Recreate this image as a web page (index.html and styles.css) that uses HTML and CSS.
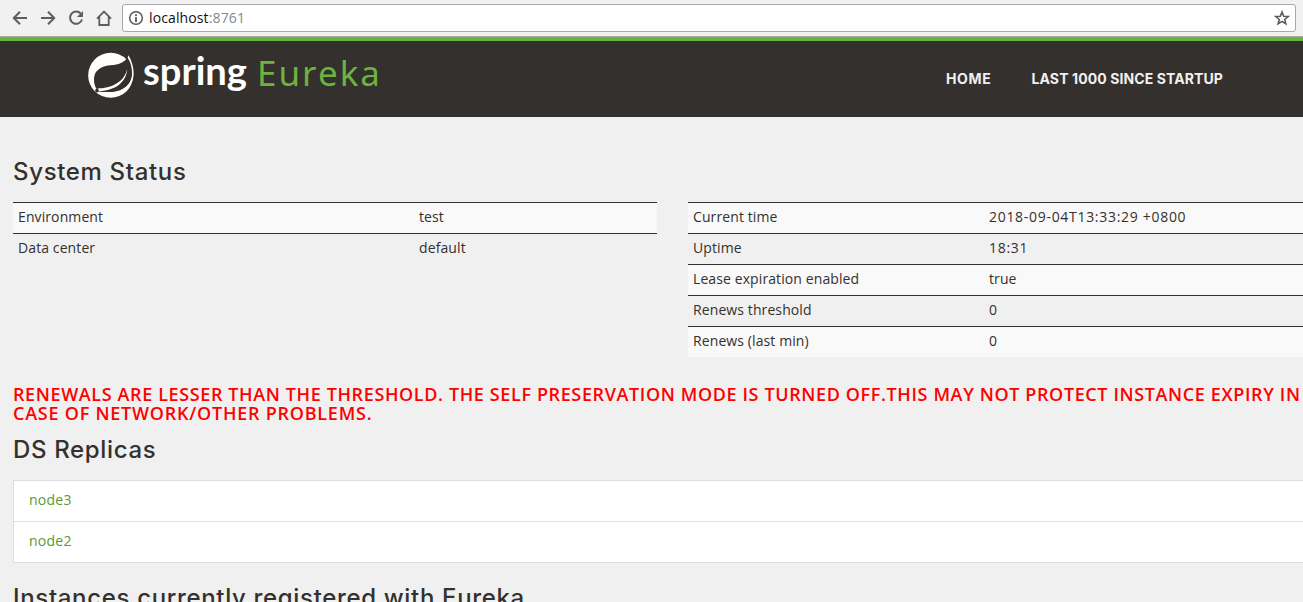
FILE: index.html
```
<!DOCTYPE html>
<html lang="en">
<head>
<meta charset="utf-8">
<title>Eureka</title>
<link rel="stylesheet" href="styles.css">
</head>
<body>
<div class="browser-bar">
  <svg class="nav-icons" width="122" height="36" viewBox="0 0 122 36" fill="none" stroke="#5a5d61" stroke-width="2">
    <path d="M27 18H14.5M20 11.8L13.8 18L20 24.2"/>
    <path d="M41 18H53.5M48 11.8L54.2 18L48 24.2"/>
    <path d="M80.7 13.6A6.1 6.1 0 1 0 82 19.5"/>
    <path d="M83 11V17H77Z" fill="#5a5d61" stroke="none"/>
    <path d="M97 18.6L104 11.6L111 18.6M99.3 17V25H108.7V17" stroke-width="1.8"/>
  </svg>
  <div class="address">
    <svg class="info" width="16" height="16" viewBox="0 0 16 16"><circle cx="8" cy="8" r="6.3" fill="none" stroke="#55585c" stroke-width="1.5"/><path d="M7.1 4.2h1.8v1.8H7.1zM7.1 7h1.8v5H7.1z" fill="#55585c"/></svg>
    <span class="url">localhost<span class="port">:8761</span></span>
    <svg class="star" width="16" height="16" viewBox="0 0 16 16"><path d="M8 1.9L9.7 6.2L14.2 6.5L10.7 9.4L11.9 13.9L8 11.4L4.1 13.9L5.3 9.4L1.8 6.5L6.3 6.2Z" fill="none" stroke="#55585c" stroke-width="1.5"/></svg>
  </div>
</div>
<header class="navbar">
  <svg class="logo" width="300" height="60" viewBox="0 0 300 60">
    <g transform="scale(.33333)">
      <circle cx="68" cy="82" r="67.5" fill="#fff"/>
      <path d="M121 22C136 48 142 70 140 92L150 82V20Z" fill="#34302d"/>
      <path d="M121 24C110 44 96 49 66 52C36 55 18 70 18 94C18 105 20 114 25 122L34 131C66 134 92 131 105 122C122 112 132 96 133 80C134 62 130 42 121 24Z" fill="#34302d"/>
      <path d="M118 63C110 94 88 110 58 118C48 121 38 121 28 122L32 130C60 128 84 121 98 106C110 94 117 80 118 63Z" fill="#fff"/>
      <path d="M121 22C134 42 139 68 136 88C132 108 118 124 100 129L98 126C119 118 131 100 132 80C133 60 128 42 119 29Z" fill="#fff"/>
      <circle cx="27" cy="128" r="5.5" fill="#34302d"/>
    </g>
    <text class="logo-spring" x="55" y="37" textLength="104" lengthAdjust="spacingAndGlyphs">spring</text>
    <text class="logo-eureka" x="169" y="38" textLength="123" lengthAdjust="spacing">Eureka</text>
  </svg>
  <nav class="links"><a class="home">HOME</a><a class="last">LAST 1000 SINCE STARTUP</a></nav>
</header>
<main class="content">
  <h1 class="title status-title">System Status</h1>
  <div class="tables">
    <table class="status left">
      <tr><td>Environment</td><td>test</td></tr>
      <tr><td>Data center</td><td>default</td></tr>
    </table>
    <table class="status right">
      <tr><td>Current time</td><td class="digits">2018-09-04T13:33:29 +0800</td></tr>
      <tr><td>Uptime</td><td class="digits">18:31</td></tr>
      <tr><td>Lease expiration enabled</td><td>true</td></tr>
      <tr><td>Renews threshold</td><td>0</td></tr>
      <tr><td>Renews (last min)</td><td>0</td></tr>
    </table>
  </div>
  <h4 class="warning"><span class="line-one">RENEWALS ARE LESSER THAN THE THRESHOLD. THE SELF PRESERVATION MODE IS TURNED OFF.THIS MAY NOT PROTECT INSTANCE EXPIRY IN</span> <span class="line-two">CASE OF NETWORK/OTHER PROBLEMS.</span></h4>
  <h1 class="title replicas-title">DS Replicas</h1>
  <ul class="nodes"><li>node3</li><li>node2</li></ul>
  <h1 class="title instances-title">Instances currently registered with Eureka</h1>
</main>
</body>
</html>
```
FILE: styles.css
```
* { box-sizing: border-box; }
html, body { margin: 0; height: 602px; overflow: hidden; }
body { background: #f0f0f0; color: #34302d; font: 14px/20px "Open Sans", sans-serif; }
.browser-bar { height: 37px; display: flex; align-items: flex-start; background: #f1f1f1; border-bottom: 1px solid #aaa; }
.nav-icons { flex: none; }
.address { width: 1174px; height: 28px; margin-top: 4px; display: flex; align-items: center; background: #fff; border: 1px solid #a8a8a8; border-radius: 3px; padding: 0 5px; }
.url { margin-left: 5px; color: #111; font: 14px/20px "Open Sans", sans-serif; letter-spacing: .12px; }
.port { color: #85888c; }
.star { margin-left: auto; }
.navbar { height: 80px; border-top: 4px solid #6db33f; background: #34302d; display: flex; justify-content: space-between; padding: 4px 80px 0 88px; }
.logo { margin-top: 3px; overflow: visible; }
.logo-spring { font: 700 39px "Lato", sans-serif; fill: #fff; }
.logo-eureka { font: 400 35px "Noto Sans", sans-serif; fill: #6db33f; }
.links { display: flex; gap: 40px; padding-top: 24px; color: #f1f1f1; font: 700 14px/20px "Inter", sans-serif; white-space: nowrap; }
.home { letter-spacing: .7px; }
.last { letter-spacing: .1px; }
.content { width: 1345px; padding: 38px 13px 0; }
.title { margin: 0; font: 500 24px/33px "Inter", sans-serif; letter-spacing: .66px; white-space: nowrap; }
.tables { display: flex; align-items: flex-start; gap: 31px; margin-top: 14px; }
.status { width: 644px; flex: none; table-layout: fixed; border-collapse: separate; border-spacing: 0; letter-spacing: .1px; }
.status td { height: 31px; padding: 0 5px 2px; border-top: 1px solid #34302d; line-height: 20px; }
.status tr:nth-child(odd) { background: #f9f9f9; }
.left td:first-child { width: 401px; }
.right td:first-child { width: 296px; }
.status .digits { letter-spacing: .7px; }
.warning { margin: 28px 0 0; color: #f00; font: 600 18px/19px "Open Sans", sans-serif; white-space: nowrap; }
.line-one, .line-two { display: block; }
.line-one { letter-spacing: .62px; }
.line-two { letter-spacing: .76px; }
.replicas-title { margin-top: 10px; }
.nodes { list-style: none; margin: 14px 0 0; padding: 0; border: 1px solid #ddd; background: #fff; color: #5a9a2f; letter-spacing: .25px; }
.nodes li { height: 40px; padding: 9px 15px; }
.nodes li + li { height: 41px; border-top: 1px solid #ddd; }
.instances-title { margin-top: 18px; }
```
